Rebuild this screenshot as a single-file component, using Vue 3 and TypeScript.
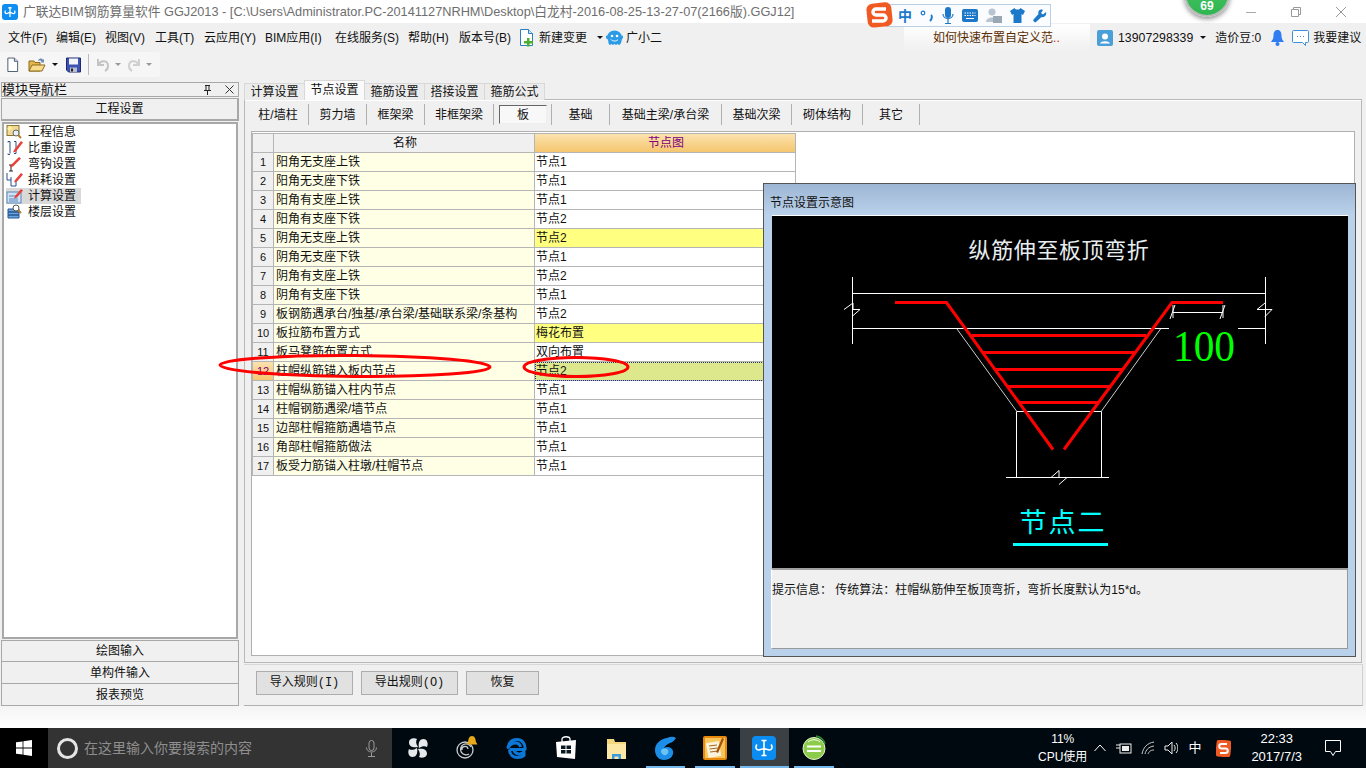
<script setup lang="ts">
interface Row {
  name: string
  value: string
  tone?: string
}

const menus = [
  { label: '文件(F)', width: 48 },
  { label: '编辑(E)', width: 49 },
  { label: '视图(V)', width: 50 },
  { label: '工具(T)', width: 49 },
  { label: '云应用(Y)', width: 61 },
  { label: 'BIM应用(I)', width: 70 },
  { label: '在线服务(S)', width: 73 },
  { label: '帮助(H)', width: 51 },
  { label: '版本号(B)', width: 60 },
]
const topTabs = ['计算设置', '节点设置', '箍筋设置', '搭接设置', '箍筋公式']
const subTabs = [
  { label: '柱/墙柱', width: 61 },
  { label: '剪力墙', width: 58 },
  { label: '框架梁', width: 58 },
  { label: '非框架梁', width: 69 },
  { label: '板', width: 58 },
  { label: '基础', width: 58 },
  { label: '基础主梁/承台梁', width: 112 },
  { label: '基础次梁', width: 70 },
  { label: '砌体结构', width: 71 },
  { label: '其它', width: 57 },
]
const navItems = ['工程信息', '比重设置', '弯钩设置', '损耗设置', '计算设置', '楼层设置']
const bottomNav = ['绘图输入', '单构件输入', '报表预览']
const actions = [
  { label: '导入规则(I)', width: 97 },
  { label: '导出规则(O)', width: 97 },
  { label: '恢复', width: 73 },
]

const rows: Row[] = [
  { name: '阳角无支座上铁', value: '节点1' },
  { name: '阳角无支座下铁', value: '节点1' },
  { name: '阳角有支座上铁', value: '节点1' },
  { name: '阳角有支座下铁', value: '节点2' },
  { name: '阴角无支座上铁', value: '节点2', tone: 'changed' },
  { name: '阴角无支座下铁', value: '节点1' },
  { name: '阴角有支座上铁', value: '节点2' },
  { name: '阴角有支座下铁', value: '节点1' },
  { name: '板钢筋遇承台/独基/承台梁/基础联系梁/条基构', value: '节点2' },
  { name: '板拉筋布置方式', value: '梅花布置', tone: 'changed' },
  { name: '板马凳筋布置方式', value: '双向布置' },
  { name: '柱帽纵筋锚入板内节点', value: '节点2', tone: 'current' },
  { name: '柱帽纵筋锚入柱内节点', value: '节点1' },
  { name: '柱帽钢筋遇梁/墙节点', value: '节点1' },
  { name: '边部柱帽箍筋遇墙节点', value: '节点1' },
  { name: '角部柱帽箍筋做法', value: '节点1' },
  { name: '板受力筋锚入柱墩/柱帽节点', value: '节点1' },
]

const stirrups = [
  { y: 119.5, x1: 200, x2: 374 },
  { y: 136.5, x1: 211, x2: 363 },
  { y: 153.5, x1: 223, x2: 351 },
  { y: 170.5, x1: 236, x2: 338 },
  { y: 186.5, x1: 248, x2: 327 },
]

const taskIcons = ['fan', 'swirl', 'edge', 'store', 'folder', 'glodon', 'notes', 'app', 'ball']
const running = ['glodon', 'notes', 'app', 'ball']
</script>

<template>
  <div class="screen">
    <header class="titlebar">
      <svg class="app-logo" viewBox="0 0 16 16">
        <rect width="16" height="16" rx="3" fill="#0f8df0" />
        <path d="M8 3v10M6.300 3.800h3.400M3.500 6.500C2.300 8.500 3.500 10 5 9.500L8 8.300l3 1.200c1.500.5 2.700-1 1.500-3" fill="none" stroke="#fff" stroke-width="1.300" />
      </svg>
      <span class="title-text">广联达BIM钢筋算量软件 GGJ2013 - [C:\Users\Administrator.PC-20141127NRHM\Desktop\白龙村-2016-08-25-13-27-07(2166版).GGJ12]</span>
      <div class="window-btns">
        <svg viewBox="0 0 10 10"><path d="M0 5.500h10" stroke="#aaa" fill="none" /></svg>
        <svg viewBox="0 0 10 10"><path d="M.5 2.500h7v7h-7zM2.500 2.500v-2h7v7h-2" stroke="#999" fill="none" /></svg>
        <svg viewBox="0 0 10 10"><path d="M0 0l10 10M10 0L0 10" stroke="#999" fill="none" /></svg>
      </div>
    </header>

    <nav class="menubar">
      <span v-for="m in menus" :key="m.label" class="menu-item" :style="{ width: m.width + 'px' }">{{ m.label }}</span>
      <span class="menu-extra change">
        <svg width="15" height="18" viewBox="0 0 15 18">
          <path d="M1.500 .5h8l4 4v12h-12z" fill="#fff" stroke="#2a7fc4" />
          <path d="M9.500 .5v4h4" fill="#cfe4f5" stroke="#2a7fc4" />
          <path d="M8 9v3H5v2.500h3v3h2.500v-3H14V12h-3.500V9z" fill="#4caf2e" />
        </svg>
        新建变更
        <i class="caret dark"></i>
      </span>
      <span class="menu-extra helper">
        <svg width="17" height="16" viewBox="0 0 17 16">
          <path d="M1 7.500a7.500 7 0 0 1 15 0c0 5-2 7.500-3 7.500l-1.500-1-1.500 1-1.500-1-1.500 1-1.500-1-1.500 1c-1 0-2-2.500-2-7.500z" fill="#2b9be8" />
          <path d="M0 6l2 3M17 6l-2 3" stroke="#2b9be8" stroke-width="2" />
          <circle cx="6" cy="6" r="1.300" fill="#fff" /><circle cx="11" cy="6" r="1.300" fill="#fff" />
          <path d="M5 9.500c1.500 2 5.500 2 7 0" stroke="#fff" fill="none" />
        </svg>
        广小二
      </span>
      <span class="news">如何快速布置自定义范<em>..</em></span>
      <div class="account">
        <svg width="16" height="16" viewBox="0 0 16 16">
          <rect width="16" height="16" rx="2" fill="#4a9fd8" />
          <circle cx="8" cy="6.500" r="3" fill="#fff" /><path d="M3 13.500c1-3 9-3 10 0z" fill="#fff" />
        </svg>
        <span class="phone">13907298339</span>
        <i class="caret dark"></i>
        <span class="beans">造价豆:0</span>
        <svg class="bell" width="13" height="16" viewBox="0 0 13 16">
          <path d="M6.500 0c3 0 4 2.500 4 5.500 0 3 1 4.500 2.500 6.500H0c1.500-2 2.500-3.500 2.500-6.500S3.500 0 6.500 0z" fill="#2f7df0" /><circle cx="6.500" cy="14" r="2" fill="#2f7df0" />
        </svg>
        <svg width="17" height="16" viewBox="0 0 17 16">
          <path d="M1.500.5h14a1 1 0 0 1 1 1v10a1 1 0 0 1-1 1h-2v3l-3-3h-9a1 1 0 0 1-1-1v-10a1 1 0 0 1 1-1z" fill="#fff" stroke="#3c8fd8" />
          <path d="M5 6.500h1M8 6.500h1M11 6.500h1" stroke="#3c8fd8" />
        </svg>
        <span>我要建议</span>
      </div>
    </nav>

    <div class="toolbar">
      <div class="tool-group">
        <svg class="tool" viewBox="0 0 14 16"><path d="M2 .5h7l3.500 3.500v11H2z" fill="#fff" stroke="#45556a" /><path d="M9 .5v3.500h3.500" fill="#cdd8e4" stroke="#45556a" /></svg>
        <svg class="tool wide" viewBox="0 0 18 16"><path d="M1 14V4h5l1 1.500h5V14z" fill="#e8b64a" stroke="#8a6a1e" /><path d="M1 14l3-6h13l-3 6z" fill="#f8dc8c" stroke="#8a6a1e" /><path d="M10 4c1-3 4-3 5-1l1-1v3.500h-3.500l1-1c-.7-1-2.500-1.500-3.500-.5" fill="#6a8db0" /></svg>
        <i class="caret dark open-caret"></i>
        <svg class="tool save" viewBox="0 0 15 15"><path d="M.5.5h14v14h-12l-2-2z" fill="#3d52b0" stroke="#1d2a70" /><rect x="3" y="1" width="9" height="6" fill="#f2f4fa" /><rect x="4" y="10" width="7" height="4.500" fill="#b8bcd0" /><rect x="5" y="11" width="2" height="3" fill="#222" /></svg>
        <span class="tool-sep"></span>
        <svg class="tool faded" viewBox="0 0 14 14"><path d="M2 1v6h6M3 6c2-4 9-4 9 2 0 2-1 4-3 5" fill="none" stroke="#c4c4c4" stroke-width="2" /></svg>
        <i class="caret"></i>
        <svg class="tool faded redo" viewBox="0 0 14 14"><path d="M12 1v6H6M11 6C9 2 2 2 2 8c0 2 1 4 3 5" fill="none" stroke="#d0d0d0" stroke-width="2" /></svg>
        <i class="caret"></i>
      </div>
    </div>

    <main class="workspace">
      <aside class="side">
        <div class="side-head">
          <span>模块导航栏</span>
          <svg class="pin" width="9" height="10" viewBox="0 0 9 10"><path d="M2 .5h5M3 .5v5M6 .5v5M1 5.500h7M4.500 5.500V10" stroke="#222" fill="none" /></svg>
          <svg width="9" height="9" viewBox="0 0 9 9"><path d="M.5.5l8 8M8.500.5l-8 8" stroke="#333" fill="none" /></svg>
        </div>
        <div class="side-btn first">工程设置</div>
        <ul class="side-list">
          <li v-for="(item, i) in navItems" :key="item" :class="{ selected: i === 4 }">
            <svg width="18" height="16" viewBox="0 0 18 16">
              <template v-if="i === 0">
                <rect x="1" y="1.500" width="12" height="10" fill="#f0d898" stroke="#8a7430" />
                <path d="M3 1l1 2 2-1-1 2 2 1-3 .5-1 2-.5-2-2-.5 2-1z" fill="#fff4a0" />
                <circle cx="10" cy="9" r="3" fill="#e8f0f8" stroke="#666" /><path d="M12 11l3 3" stroke="#b08030" stroke-width="2" />
              </template>
              <template v-else-if="i === 1">
                <path d="M4 1.500H2v1M2 13.500v1h2M4 1.500v12M8 1.500h2v12H8" fill="none" stroke="#2a4f8f" /><path d="M8 10l7-9 2 1.500-7 9-3 1z" fill="#e8403a" />
              </template>
              <template v-else-if="i === 2">
                <path d="M5 9v6M3 9h4M3 15h4" stroke="#222" /><path d="M5 9l8-8 2 1.500-8 8-3 1z" fill="#e8403a" />
              </template>
              <template v-else-if="i === 3">
                <path d="M1 1v7h4V5M5 8v6h5V8" fill="none" stroke="#2a4f8f" /><path d="M9 8l6-7 2 1.500-6 7-3 1z" fill="#e8403a" />
              </template>
              <template v-else-if="i === 4">
                <rect x="1" y="4" width="14" height="11" fill="#cfe2f5" stroke="#5a87b8" /><path d="M3 8h7M3 11h9M3 13h9" stroke="#5a87b8" /><path d="M9 8l6-7 2 1.500-6 7-3 1z" fill="#e8403a" />
              </template>
              <template v-else>
                <path d="M2 5h11v3H2zM2 8h11v3H2zM2 11h11v3H2z" fill="#6aa5e0" stroke="#24568f" />
                <circle cx="10" cy="4" r="3" fill="#fff" stroke="#555" /><path d="M12 6l3 3" stroke="#b08030" stroke-width="2" />
              </template>
            </svg>
            <span>{{ item }}</span>
          </li>
        </ul>
        <div v-for="b in bottomNav" :key="b" class="side-btn">{{ b }}</div>
      </aside>

      <section class="content">
        <div class="top-tabs">
          <span v-for="(t, i) in topTabs" :key="t" class="top-tab" :class="{ active: i === 1 }">{{ t }}</span>
        </div>
        <div class="panel">
          <div class="sub-tabs">
            <span v-for="t in subTabs" :key="t.label" class="sub-tab" :style="{ width: t.width + 'px' }">
              <b v-if="t.label === '板'" class="pressed">{{ t.label }}</b>
              <template v-else>{{ t.label }}</template>
            </span>
          </div>
          <div class="grid-frame">
            <div class="grid">
              <div class="cell head"></div>
              <div class="cell head">名称</div>
              <div class="cell head orange">节点图</div>
              <template v-for="(r, i) in rows" :key="r.name">
                <div class="cell num" :class="{ orange: r.tone === 'current' }">{{ i + 1 }}</div>
                <div class="cell name">{{ r.name }}</div>
                <div class="cell value" :class="r.tone">{{ r.value }}</div>
              </template>
            </div>
          </div>
        </div>
        <div class="actions">
          <button v-for="a in actions" :key="a.label" type="button" :style="{ width: a.width + 'px' }">{{ a.label }}</button>
        </div>
      </section>
    </main>

    <div class="strip"></div>

    <footer class="taskbar">
      <div class="start">
        <svg width="16" height="16" viewBox="0 0 16 16"><path d="M0 2.300l6.600-.9v6.200H0zM7.400 1.300L16 0v7.600H7.400zM0 8.400h6.600v6.200L0 13.700zM7.400 8.400H16V16l-8.600-1.300z" fill="#fff" /></svg>
      </div>
      <div class="search">
        <i class="cortana"></i>
        <span>在这里输入你要搜索的内容</span>
        <svg width="11" height="17" viewBox="0 0 11 17"><rect x="3" y=".5" width="5" height="10" rx="2.500" fill="none" stroke="#9a9a9a" /><path d="M.5 7.500c0 6 10 6 10 0M5.500 12.500v3.500M2 16.500h7" fill="none" stroke="#9a9a9a" /></svg>
      </div>
      <div class="task-icons">
        <span v-for="ic in taskIcons" :key="ic" class="task-icon" :class="{ running: running.includes(ic), focused: ic === 'app' }">
          <svg width="26" height="26" viewBox="0 0 26 26">
            <g v-if="ic === 'fan'" fill="#e6e9eb">
              <path d="M13 12C9 13 4 12 4 7.500 4 3.500 9 2.500 12 4c-1.500 2-1 5 1 8zM14 13c-1-4 0-9 4.500-9 4 0 5 5 3.500 8-2-1.500-5-1-8 1zM13 14c4-1 9 0 9 4.500 0 4-5 5-8 3.500 1.500-2 1-5-1-8zM12 13c1 4 0 9-4.500 9-4 0-5-5-3.500-8 2 1.500 5 1 8-1z" />
            </g>
            <g v-else-if="ic === 'swirl'">
              <circle cx="11" cy="15" r="8" fill="none" stroke="#c8ccd0" stroke-width="1.300" />
              <path d="M17 12a5.500 5.500 0 1 0-2 7M8 15a3 3 0 0 1 6-1" fill="none" stroke="#c8ccd0" stroke-width="1.300" />
              <path d="M18 1c3 0 3.500 3 4 6l1.500 2.500H12.500L14 7c.5-3 1-6 4-6z" fill="#e8a818" />
            </g>
            <path v-else-if="ic === 'edge'" d="M5.500 14.500H21c.5-6-3-10-8-10-4.500 0-8 3-9 8 2-3 5-4.500 7.500-4.500 2.500 0 4.500 1.500 5 4M5.500 14.500c0 5 3.500 8 8 8 2.500 0 4.500-.5 6.500-2v-3.500c-4 3.500-9.500 2-10-2.500" fill="none" stroke="#0b78d7" stroke-width="3" stroke-linejoin="round" />
            <g v-else-if="ic === 'store'">
              <path d="M3 7l20-2-1 19-18-2z" fill="#fff" /><path d="M9 7V4c0-3 8-3 8 0v3" fill="none" stroke="#fff" stroke-width="1.300" />
              <path d="M8 10.500h4.500V14H8zM13.500 10.500H18V14h-4.500zM8 15h4.500v3.500H8zM13.500 15H18v3.500h-4.500z" fill="#0b1a22" />
            </g>
            <g v-else-if="ic === 'folder'">
              <path d="M4 4h7l1 3h11v17H4z" fill="#f3d77c" /><rect x="4" y="9" width="19" height="15" fill="#fce8a4" />
              <path d="M9 19h9v5h-2.500v-2.500h-4V24H9z" fill="#3a9cdc" />
            </g>
            <g v-else-if="ic === 'glodon'">
              <path d="M24 3c-3-2-6-1-9 0C8 4 3 9 3 15c0 6 4 10 9 10 6 0 10-4 9-9-1-4-6-5-9-3 1-2 3-4 6-5 2-.5 4-2 6-5z" fill="#1c8ee8" />
              <path d="M9 16c1-3 5-3 7-1 1 2 0 4-2 5-3 1-5-2-5-4z" fill="#6cc4f4" />
            </g>
            <g v-else-if="ic === 'notes'">
              <rect x="1" y="1" width="24" height="24" rx="2" fill="#e8890c" /><rect x="3" y="3" width="20" height="20" fill="#f8c45c" />
              <rect x="5" y="7" width="13" height="15" fill="#fbf2dc" transform="rotate(-10 12 14)" />
              <path d="M7 11l8-1M7.500 14l8-1M8 17l8-1" stroke="#a06a20" /><path d="M14 17l6-14 2 1-6 14z" fill="#a8500a" />
            </g>
            <g v-else-if="ic === 'app'">
              <rect x="1" y="1" width="24" height="24" rx="4" fill="#0a8cf0" />
              <path d="M13 5v16M10.500 5.500h5M10.500 20.500h5M6 9.500C4 12 5 15 8 15l5-1.500 5 1.500c3 0 4-3 2-5.500" fill="none" stroke="#fff" stroke-width="1.600" />
            </g>
            <g v-else>
              <circle cx="13" cy="13.500" r="11" fill="#8ccc4a" stroke="#e4f2d0" />
              <path d="M6 11.500h14M6 16h14" stroke="#fff" stroke-width="2" /><path d="M7 7c3-3 9-3 12 0" stroke="#fff" fill="none" /><path d="M15 1c5 1 8 4 9 8" stroke="#2e8a2e" stroke-width="1.500" fill="none" />
            </g>
          </svg>
        </span>
      </div>
      <div class="tray">
        <div class="cpu"><span>11%</span><span>CPU使用</span></div>
        <svg class="tr-up" width="12" height="8" viewBox="0 0 12 8"><path d="M.5 7L6 1l5.500 6" fill="none" stroke="#fff" /></svg>
        <svg class="tr-bat" width="16" height="12" viewBox="0 0 16 12"><rect x="4" y="2" width="11" height="9" fill="none" stroke="#eee" /><rect x="6" y="4" width="7" height="5" fill="#eee" /><path d="M0 3h4M0 6h4" stroke="#eee" /></svg>
        <svg class="tr-wifi" width="15" height="14" viewBox="0 0 15 14"><path d="M1 13C2 7 6 2 13 1M4 13c1-4 3-7 9-8M7 13c1-2 2-4 6-4" fill="none" stroke="#ccc" /></svg>
        <svg class="tr-vol" width="14" height="14" viewBox="0 0 14 14"><path d="M1 5h3l4-4v12L4 9H1z" fill="none" stroke="#eee" /><path d="M10 4c1.500 2 1.500 4 0 6M12 2c2.500 3 2.500 7 0 10" fill="none" stroke="#eee" /></svg>
        <span class="ime">中</span>
        <svg class="tr-s" width="15" height="17" viewBox="0 0 15 17"><rect width="15" height="17" rx="3" fill="#ee5a24" transform="rotate(6 7.500 8.500)" /><path d="M11 4H5.500a1.800 1.800 0 0 0 0 4.500h4a1.800 1.800 0 0 1 0 4.500H4" fill="none" stroke="#fff" stroke-width="2" /></svg>
        <div class="clock"><span>22:33</span><span>2017/7/3</span></div>
        <svg class="notify" width="16" height="16" viewBox="0 0 16 16"><path d="M.5.5h15v11h-5l-2.500 4-2.500-4h-5z" fill="none" stroke="#fff" /></svg>
      </div>
    </footer>

    <!-- 浮在窗口上面的部分 -->
    <div class="float-ball"><span>69</span></div>

    <div class="ime-bar">
      <svg class="ime-logo" width="28" height="26" viewBox="0 0 28 26">
        <rect x="1" y="1" width="25" height="24" rx="6" fill="#f05a22" transform="rotate(-6 13 13)" />
        <path d="M20 7H10a3 3 0 0 0 0 6h7a3 3 0 0 1 0 6H6" fill="none" stroke="#fff" stroke-width="3.500" />
      </svg>
      <div class="ime-tools">
        <span class="ime-zh">中</span>
        <svg width="14" height="14" viewBox="0 0 14 14"><circle cx="3" cy="4" r="1.800" fill="none" stroke="#1c78c8" stroke-width="1.200" /><path d="M11 6c1.500 1 1 4-1 6" fill="none" stroke="#1c78c8" stroke-width="2" /></svg>
        <svg width="12" height="17" viewBox="0 0 12 17"><rect x="3" y="0" width="6" height="11" rx="3" fill="#1c78c8" /><path d="M1 7c0 6 10 6 10 0M6 12v4M3 16.500h6" fill="none" stroke="#1c78c8" stroke-width="1.200" /></svg>
        <svg width="16" height="13" viewBox="0 0 16 13"><rect width="16" height="13" rx="2" fill="#1c78c8" /><path d="M2.500 4h11M2.500 6.500h11" stroke="#fff" stroke-dasharray="1.500 1" /><path d="M4 9.500h8" stroke="#fff" /></svg>
        <svg width="16" height="15" viewBox="0 0 16 15"><circle cx="6" cy="4" r="3.500" fill="#b8c4d0" /><path d="M0 14c0-6 12-6 12 0z" fill="#b8c4d0" /><rect x="7" y="8" width="9" height="7" fill="#9aa8b5" /></svg>
        <svg width="15" height="15" viewBox="0 0 15 15"><path d="M4.500 0L0 3l2 4 1.500-1v9h8V6L13 7l2-4-4.500-3c-1 2-5 2-6 0z" fill="#1c78c8" /></svg>
        <svg width="14" height="14" viewBox="0 0 14 14"><path d="M13 3l-3 2.500-2-1.500 2-3C7-.5 4.500 2 5.500 5L.5 10.500c-.8 1.500 1 3.500 2.500 2.500L8.500 8c3 1 5.500-2 4.500-5z" fill="#1c78c8" /></svg>
      </div>
    </div>

    <svg class="marks" width="420" height="32" viewBox="0 0 420 32">
      <ellipse cx="137" cy="14" rx="135" ry="10.500" fill="none" stroke="#f00" stroke-width="3" transform="rotate(.4 137 14)" />
      <ellipse cx="358" cy="15" rx="52" ry="9.500" fill="none" stroke="#f00" stroke-width="3" />
    </svg>

    <div class="detail">
      <div class="detail-title">节点设置示意图</div>
      <svg class="drawing" width="576" height="352" viewBox="0 0 576 352">
        <rect width="576" height="352" fill="#000" />
        <text x="287" y="42" class="t-title">纵筋伸至板顶弯折</text>
        <g fill="none" stroke="#fff">
          <path d="M80.500 61v67M493.500 61v67M80 77.500h413M80 112.500h317M466 112.500h27" />
          <path d="M72 93.500l9-6.500v6.500h7l-8 7M493 87l-8 6.500h8v0h7l-7 7" />
          <path d="M185 113l59.500 82M388.500 113l-59 82" stroke-width=".8" />
          <path d="M244.500 195.500h85M244.500 195.500v66M329.500 195.500v66M234 261.500h103" />
          <path d="M279 261.500l8-7v7h8l-8 7" />
          <path d="M401 96.500h50M401 89v13M451 89v13M398 103l5-14M448 103l5-14" />
        </g>
        <path d="M123 86.500h51.500L281 233.500M292 233.500L400 86.500h51" fill="none" stroke="#f00" stroke-width="3" />
        <path v-for="s in stirrups" :key="s.y" :d="`M${s.x1} ${s.y}H${s.x2}`" stroke="#f00" stroke-width="3" />
        <text x="401" y="145" class="t-dim" textLength="62" lengthAdjust="spacingAndGlyphs">100</text>
        <text x="291" y="316" class="t-node">节点二</text>
        <rect x="241" y="327" width="95" height="3" fill="#0ff" />
      </svg>
      <div class="detail-info">提示信息&#xFF1A; 传统算法&#xFF1A;柱帽纵筋伸至板顶弯折&#xFF0C;弯折长度默认为15*d。</div>
    </div>
  </div>
</template>

<style>
html,
body {
  margin: 0;
  background: #f0f0f0;
}
</style>

<style scoped>
.screen {
  position: relative;
  width: 1366px;
  height: 768px;
  overflow: hidden;
  display: flex;
  flex-direction: column;
  background: #f0f0f0;
  color: #111;
  font: 12px/16px "Liberation Sans", "Noto Sans CJK SC", sans-serif;
}

.titlebar {
  flex: 0 0 23px;
  display: flex;
  align-items: center;
  padding-left: 2px;
  background: #fff;
}
.app-logo {
  width: 16px;
  height: 16px;
  margin-right: 5px;
}
.title-text {
  color: #6e6e6e;
  font-size: 12.750px;
  white-space: nowrap;
}
.window-btns {
  margin-left: auto;
  display: flex;
  align-items: center;
  gap: 35px;
  padding-right: 20px;
}
.window-btns svg {
  width: 10px;
  height: 10px;
}

.menubar {
  flex: 0 0 29px;
  display: flex;
  align-items: center;
  padding-left: 8px;
  white-space: nowrap;
}
.menu-item,
.menu-extra,
.news,
.account {
  flex: none;
}
.menu-extra {
  display: flex;
  align-items: center;
  gap: 5px;
}
.helper {
  margin-left: -2px;
  gap: 3px;
}
.news {
  margin-left: 242px;
  width: 186px;
  height: 27px;
  box-sizing: border-box;
  padding: 6px 0 0 29px;
  color: #5a2d00;
  background: linear-gradient(#fff, #f0f0f0);
}
.news em {
  color: #c03000;
  font-style: normal;
}
.account {
  margin-left: 7px;
  display: flex;
  align-items: center;
  gap: 4px;
}
.account .caret {
  margin: 0 3px;
}
.phone {
  margin-left: 1px;
  font-size: 12.300px;
}
.beans {
  margin-left: 2px;
}
.bell {
  margin: 0 4px 0 6px;
}

.caret {
  display: inline-block;
  width: 0;
  height: 0;
  margin: 0 5px;
  border: 3px solid transparent;
  border-top: 3px solid #999;
  border-bottom: 0;
}
.caret.dark {
  border-top-color: #111;
}
.open-caret {
  margin: 0 3px 0 6px;
}

.toolbar {
  flex: 0 0 28px;
  display: flex;
  align-items: flex-start;
}
.tool-group {
  display: flex;
  align-items: center;
  width: 160px;
  height: 25px;
  padding-left: 6px;
  box-sizing: border-box;
  background: #f6f6f6;
  border-radius: 3px;
}
.tool {
  width: 13px;
  height: 16px;
}
.tool.wide {
  width: 18px;
  margin-left: 9px;
}
.tool.save {
  width: 15px;
  margin-left: 5px;
}
.tool-sep {
  width: 1px;
  height: 21px;
  margin: 0 7px;
  background: #bbb;
}
.tool.faded {
  width: 14px;
}
.tool.redo {
  margin-left: 1px;
}

.workspace {
  flex: 0 0 626px;
  display: flex;
  min-height: 0;
}

.side {
  width: 238px;
  padding-top: 2px;
  margin-left: 1px;
  display: flex;
  flex-direction: column;
  flex: none;
}
.side-head {
  height: 13px;
  margin-bottom: 1px;
  display: flex;
  align-items: center;
  border: 1px solid #a8a8a8;
  font-size: 13px;
  line-height: 13px;
}
.side-head span {
  flex: 1;
}
.pin {
  margin-right: 13px;
}
.side-head svg:last-child {
  margin-right: 4px;
}
.side-btn {
  height: 22px;
  box-sizing: border-box;
  line-height: 22px;
  text-align: center;
  border: 1px solid #a8a8a8;
  border-top: 0;
}
.side-btn.first {
  height: 23px;
  line-height: 21px;
  border-top: 1px solid #a8a8a8;
  border-width: 1px 2px 2px 1px;
}
.side-list {
  flex: 1;
  list-style: none;
  margin: 1px 1px 0;
  padding: 0 0 0 2px;
  background: #fff;
  border: 2px solid #a8a8a8;
}
.side-list + .side-btn {
  border-top: 1px solid #a8a8a8;
  line-height: 20px;
  margin-top: 1px;
}
.side-list li {
  width: 75px;
  height: 16px;
  display: flex;
  align-items: center;
  gap: 4px;
  font-size: 12px;
}
.side-list li.selected {
  background: #d9d9d9;
}

.content {
  flex: 1;
  margin-left: 5px;
  padding-top: 1px;
  display: flex;
  flex-direction: column;
  min-width: 0;
}
.top-tabs {
  display: flex;
  align-items: flex-end;
  height: 19px;
  margin-bottom: -1px;
  position: relative;
  z-index: 1;
}
.top-tab {
  width: 59px;
  height: 16px;
  line-height: 16px;
  text-align: center;
  background: #ececec;
  border: 1px solid #d8d8d8;
  border-bottom: 0;
  margin-right: -1px;
}
.top-tab.active {
  height: 19px;
  line-height: 18px;
  background: #fafafa;
}
.panel {
  flex: 0 0 564px;
  margin-right: 4px;
  box-sizing: border-box;
  border: 1px solid #b8b8b8;
  box-shadow: inset 0 1px 0 #fff;
  padding: 4px 6px 6px 3px;
  display: flex;
  flex-direction: column;
}
.sub-tabs {
  display: flex;
  height: 21px;
  flex: none;
  margin-bottom: 6px;
}
.sub-tab {
  flex: none;
  box-sizing: border-box;
  display: flex;
  align-items: center;
  justify-content: center;
  border-right: 1px solid #b0b0b0;
  white-space: nowrap;
}
.sub-tab .pressed {
  margin: 0 4px 0 5px;
}
.pressed {
  width: 100%;
  height: 19px;
  line-height: 19px;
  text-align: center;
  font-weight: normal;
  box-sizing: border-box;
  background: #f8f8f8;
  border: 1px solid;
  border-color: #666 #eee #eee #666;
}
.grid-frame {
  flex: 1;
  margin-left: 3px;
  background: #fff;
  border: 1px solid #b0b0b0;
  padding: 1px 0 0 0;
}
.grid {
  display: grid;
  grid-template-columns: 21px 261px 261px;
  grid-auto-rows: 19px;
  width: 544px;
  border-left: 1px solid #b5b5b5;
  border-top: 1px solid #b5b5b5;
  box-sizing: border-box;
}
.cell {
  box-sizing: border-box;
  border-right: 1px solid #b5b5b5;
  border-bottom: 1px solid #b5b5b5;
  padding-left: 2px;
  line-height: 18px;
  white-space: nowrap;
  overflow: hidden;
}
.head {
  text-align: center;
  background: #f0f0f0;
}
.head.orange,
.num.orange {
  color: #800080;
  background: linear-gradient(#fbe2ae, #f5c66e);
}
.num {
  padding: 0;
  text-align: center;
  background: #f0f0f0;
  font-size: 11px;
}
.name {
  background: #ffffe6;
}
.value {
  padding-left: 1px;
  background: #fff;
}
.value.changed {
  background: #ffff80;
}
.value.current {
  background: #dde88c;
  outline: 1px dotted #223080;
  outline-offset: -1px;
}

.actions {
  flex: 1;
  display: flex;
  align-items: flex-start;
  gap: 8px;
  margin: 1px 3px 0 0;
  padding: 6px 0 0 12px;
  border-top: 1px solid #d8d8d8;
  border-right: 1px solid #d0d0d0;
  border-bottom: 1px solid #b0b0b0;
}
.actions button {
  height: 24px;
  padding: 0;
  font: inherit;
  font-family: "Liberation Mono", "Noto Sans CJK SC", monospace;
  color: #111;
  background: #e1e1e1;
  border: 1px solid #adadad;
}

.strip {
  flex: 0 0 22px;
  background: linear-gradient(#f4f4f4, #fff);
}

.taskbar {
  flex: 0 0 40px;
  display: flex;
  align-items: stretch;
  color: #fff;
  background: #00090f;
}
.start {
  width: 48px;
  display: flex;
  align-items: center;
  justify-content: center;
  background: #000;
}
.search {
  width: 344px;
  display: flex;
  align-items: center;
  padding: 0 0 0 9px;
  box-sizing: border-box;
  background: #333;
  color: #8e8e8e;
  font-size: 14px;
}
.search span {
  flex: 1;
  margin-left: 6px;
}
.search svg {
  margin-right: 15px;
}
.cortana {
  width: 15px;
  height: 15px;
  border: 3px solid #e4e4e4;
  border-radius: 50%;
}
.task-icons {
  display: flex;
  margin-left: 1px;
}
.task-icon {
  position: relative;
  width: 49.500px;
  display: flex;
  align-items: center;
  justify-content: center;
  box-sizing: border-box;
}
.task-icon.running::after {
  content: "";
  position: absolute;
  left: 5px;
  right: 5px;
  bottom: 0;
  height: 2px;
  background: #76b9ed;
}
.task-icon.focused {
  background: #3a4044;
}
.task-icon.focused::after {
  left: 0;
  right: 0;
}
.tray {
  flex: 1;
  display: flex;
  align-items: center;
  justify-content: flex-end;
  font-size: 12px;
}
.cpu,
.clock {
  display: flex;
  flex-direction: column;
  align-items: center;
  line-height: 18px;
}
.tr-up {
  margin-left: 7px;
}
.tr-bat {
  margin-left: 10px;
}
.tr-wifi {
  margin-left: 9px;
}
.tr-vol {
  margin-left: 8px;
}
.ime {
  margin-left: 10px;
  font-size: 13px;
}
.tr-s {
  margin-left: 15px;
}
.clock {
  margin-left: 20px;
  font-size: 13px;
}
.notify {
  margin: 0 25px 0 23px;
}

.float-ball {
  position: absolute;
  left: 1184px;
  top: -29px;
  width: 42px;
  height: 42px;
  border: 2px solid #b8bcb8;
  border-radius: 50%;
  background: linear-gradient(#4ec96a, #2fb650);
  box-shadow: 0 2px 5px rgba(0, 0, 0, 0.45);
  text-align: center;
  color: #fff;
  font-weight: bold;
  font-size: 12px;
}
.float-ball span {
  position: absolute;
  left: 0;
  right: 0;
  bottom: 1px;
}

.ime-bar {
  position: absolute;
  left: 866px;
  top: 2px;
  display: flex;
  align-items: center;
}
.ime-logo {
  position: relative;
  z-index: 1;
}
.ime-tools {
  margin: 1px 0 0 -8px;
  width: 165px;
  height: 23px;
  box-sizing: border-box;
  display: flex;
  align-items: center;
  gap: 8px;
  padding-left: 11px;
  background: #fafcff;
  border: 1px solid #b8cfe4;
}
.ime-zh {
  color: #1c78c8;
  font-size: 14px;
  font-weight: bold;
}

.marks {
  position: absolute;
  left: 218px;
  top: 352px;
}

.detail {
  position: absolute;
  left: 763px;
  top: 183px;
  width: 593px;
  height: 474px;
  box-sizing: border-box;
  border: 1px solid #555;
  background: #b9d1ea;
  padding: 0 7px 7px 8px;
  display: flex;
  flex-direction: column;
}
.detail-title {
  height: 31px;
  margin: 0 -7px 0 -8px;
  padding: 12px 0 0 6px;
  box-sizing: border-box;
  font-size: 12px;
  line-height: 14px;
  background: linear-gradient(#9db6d4, #b9d1ea);
}
.drawing {
  display: block;
  flex: none;
  border-top: 1px solid #fff;
  box-sizing: content-box;
}
.t-title {
  fill: #e8eef0;
  font-size: 22px;
  letter-spacing: 0.6px;
  text-anchor: middle;
}
.t-dim {
  fill: #0f0;
  font-family: "Liberation Serif", serif;
  font-size: 44px;
}
.t-node {
  fill: #0ff;
  font-size: 27px;
  letter-spacing: 2px;
  text-anchor: middle;
}
.detail-info {
  flex: 1;
  margin-left: -1px;
  background: #f0f0f0;
  border-top: 2px solid #a0a0a0;
  border-left: 1px solid #fff;
  border-right: 1px solid #999;
  border-bottom: 1px solid #999;
  padding: 12px 0 0 0;
  line-height: 16px;
  font-size: 12px;
  white-space: pre;
}
</style>
